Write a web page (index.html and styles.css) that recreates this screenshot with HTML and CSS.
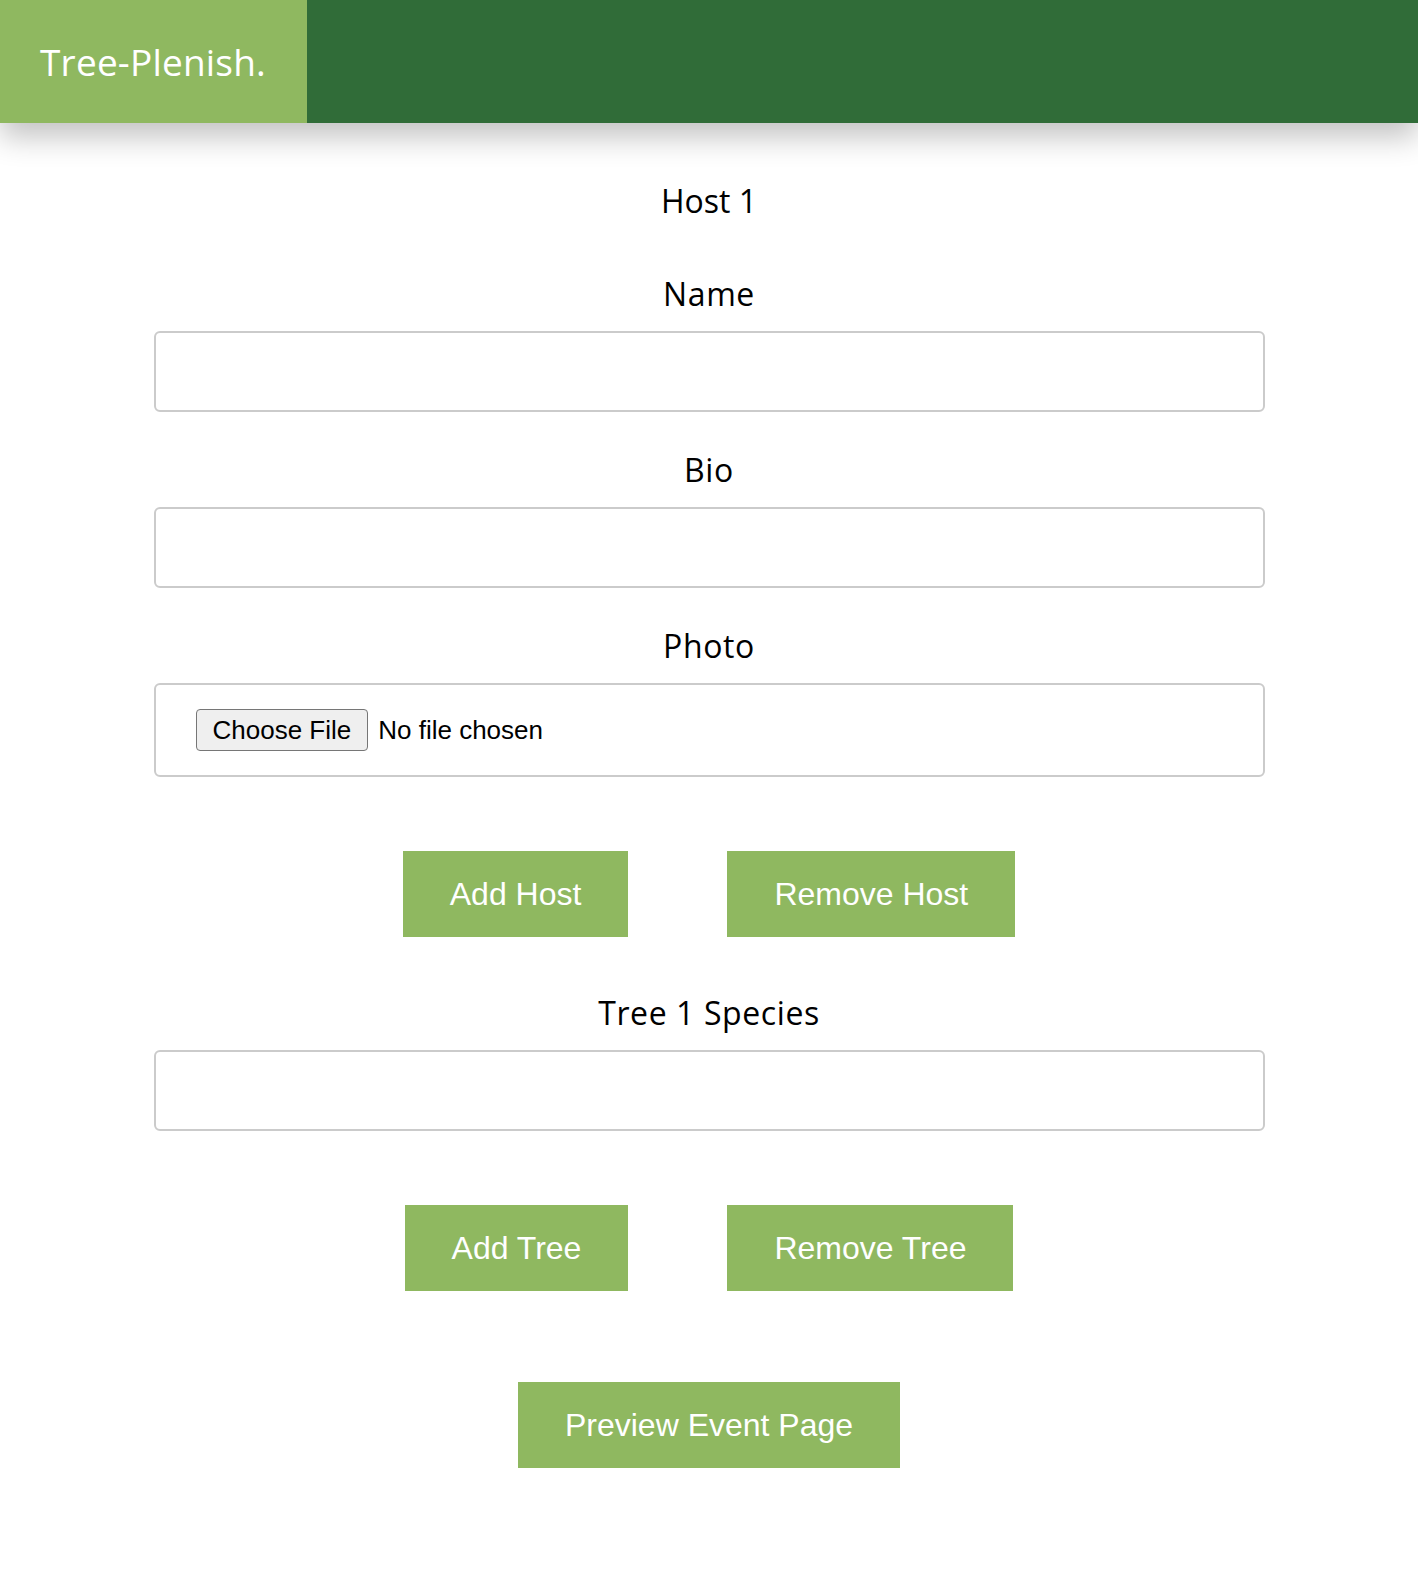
FILE: index.html
```html
<!DOCTYPE html>
<html lang="en">
<head>
<meta charset="utf-8">
<title>Tree-Plenish</title>
<link rel="stylesheet" href="styles.css">
</head>
<body>
<header class="topbar">
  <div class="brand">Tree-Plenish.</div>
</header>
<main class="form">
  <h2 class="section-title">Host 1</h2>
  <div class="field">
    <label class="field-label" for="name">Name</label>
    <input class="text-input" id="name" type="text">
  </div>
  <div class="field">
    <label class="field-label" for="bio">Bio</label>
    <input class="text-input" id="bio" type="text">
  </div>
  <div class="field">
    <label class="field-label" for="photo">Photo</label>
    <div class="file-field">
      <input class="file-input" id="photo" type="file">
    </div>
  </div>
  <div class="button-row">
    <button class="btn" type="button">Add Host</button>
    <button class="btn" type="button">Remove Host</button>
  </div>
  <div class="field field-tree">
    <label class="field-label" for="species">Tree 1 Species</label>
    <input class="text-input" id="species" type="text">
  </div>
  <div class="button-row">
    <button class="btn" type="button">Add Tree</button>
    <button class="btn" type="button">Remove Tree</button>
  </div>
  <div class="button-row preview-row">
    <button class="btn" type="button">Preview Event Page</button>
  </div>
</main>
</body>
</html>
```
FILE: styles.css
```css
html, body {
  margin: 0;
  padding: 0;
  background: #ffffff;
}

body {
  font-family: "Open Sans", "DejaVu Sans", sans-serif;
  color: #000000;
}

.topbar {
  display: flex;
  height: 123px;
  background: #306c38;
  box-shadow: 0 14px 28px rgba(0, 0, 0, 0.24);
  position: relative;
  z-index: 1;
}

.brand {
  width: 307px;
  box-sizing: border-box;
  padding-left: 40px;
  display: flex;
  align-items: center;
  background: #8fb860;
  color: #ffffff;
  font-size: 37px;
  letter-spacing: 0.2px;
}

.form {
  width: 1111px;
  margin: 0 auto;
  padding-top: 58px;
  padding-bottom: 110px;
  display: flex;
  flex-direction: column;
  align-items: stretch;
}

.section-title {
  margin: 0 0 53px;
  font-size: 32px;
  font-weight: 400;
  line-height: 40px;
  text-align: center;
}

.field {
  display: flex;
  flex-direction: column;
  margin-bottom: 38px;
}

.field-label {
  display: block;
  font-size: 32px;
  line-height: 40px;
  text-align: center;
  letter-spacing: 0.6px;
  margin-bottom: 17px;
}

.text-input {
  display: block;
  box-sizing: border-box;
  width: 100%;
  height: 81px;
  margin: 0;
  border: 2px solid #cbcbcb;
  border-radius: 6px;
  background: #ffffff;
  font-size: 26px;
  padding: 0 20px;
}

.file-field {
  box-sizing: border-box;
  height: 94px;
  border: 2px solid #cbcbcb;
  border-radius: 6px;
  padding: 0 40px;
  display: flex;
  align-items: center;
}

.file-input {
  font-family: "Liberation Sans", Arial, sans-serif;
  font-size: 26px;
  color: #000000;
}

.file-input::file-selector-button {
  font-family: "Liberation Sans", Arial, sans-serif;
  font-size: 26px;
  color: #000000;
  height: 42px;
  padding: 0 16px;
  margin: 0 10px 0 0;
  background: #efefef;
  border: 1px solid #767676;
  border-radius: 4px;
}

.button-row {
  display: flex;
  justify-content: center;
  gap: 99px;
  margin-top: 36px;
  margin-bottom: 56px;
}

.field-tree {
  margin-bottom: 38px;
}

.preview-row {
  margin-top: 35px;
  margin-bottom: 0;
}

.btn {
  font-family: "Liberation Sans", Arial, sans-serif;
  font-size: 32px;
  line-height: 38px;
  color: #ffffff;
  background: #8fb860;
  border: none;
  border-radius: 0;
  padding: 24px 47px;
  margin: 0;
  cursor: pointer;
}
```
